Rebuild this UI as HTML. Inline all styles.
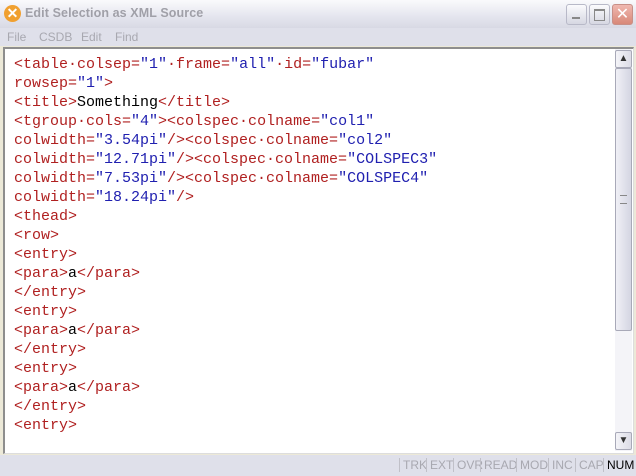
<!DOCTYPE html>
<html><head><style>
body{margin:0;width:636px;height:476px;overflow:hidden;background:#ece9d8;font-family:"Liberation Sans",sans-serif;position:relative}
.title{position:absolute;left:0;top:0;width:636px;height:28px;background:linear-gradient(#fafafc,#e4e5ee 60%,#d8d9e4);}
.title span{position:absolute;left:25px;top:6px;font-size:12.5px;font-weight:bold;color:#a0a0a8;letter-spacing:0.1px}
.logo{position:absolute;left:4px;top:5px;width:17px;height:17px;border-radius:50%;background:#f0a030;color:#fff;font-size:14px;font-weight:bold;text-align:center;line-height:17px}
.btn{position:absolute;top:4px;width:19px;height:19px;border:1px solid #b8b9c8;border-radius:3px;background:linear-gradient(#fbfbfd,#d6d7e2)}
.menu{position:absolute;left:0;top:28px;width:636px;height:18px;background:#dfe0ea;font-size:12px;color:#a8a8b0}
.menu span{position:absolute;top:2px}
.edit{position:absolute;left:3px;top:47px;width:628px;height:404px;background:#fff;border-top:2px solid #8e8e8e;border-left:2px solid #8e8e8e;border-right:1px solid #ddd;border-bottom:1px solid #ddd}
pre{margin:0;position:absolute;left:9px;top:6px;font-family:"Liberation Mono",monospace;font-size:15px;line-height:19px;color:#b02020;-webkit-text-stroke:0}
.v{color:#2020b0}.t{color:#000}
.sb{position:absolute;left:615px;top:49px;width:17px;height:402px;background:#f4f4f8}
.sbb{position:absolute;left:0;width:15px;height:16px;border:1px solid #a8a9b8;border-radius:2px;background:linear-gradient(90deg,#f4f4f8,#dcdce6);font-size:10px;text-align:center;line-height:16px;color:#333}
.thumb{position:absolute;left:0;top:19px;width:15px;height:261px;border:1px solid #a8a9b8;border-radius:2px;background:linear-gradient(90deg,#f0f0f6,#d4d5e2)}
.status{position:absolute;left:0;top:455px;width:636px;height:21px;background:#dfe0ea;font-size:12px;color:#a8a8b0}
.status span{position:absolute;top:3px;border-left:1px solid #c0c0c8;padding-left:3px}
</style></head><body>
<div class="title"><div class="logo">✕</div><span>Edit Selection as XML Source</span>
<div class="btn" style="left:566px"><div style="position:absolute;left:5px;top:12px;width:8px;height:2px;background:#888"></div></div>
<div class="btn" style="left:589px"><div style="position:absolute;left:4px;top:4px;width:9px;height:9px;border:1px solid #888;border-top-width:2px"></div></div>
<div class="btn" style="left:612px;background:linear-gradient(#f0b8b0,#d88878);border-color:#c89088;color:#fff;font-size:16px;text-align:center;line-height:19px">✕</div>
</div>
<div class="menu"><span style="left:7px">File</span><span style="left:39px">CSDB</span><span style="left:81px">Edit</span><span style="left:115px">Find</span></div>
<div class="edit"><pre>&lt;table·colsep=<span class="v">"1"</span>·frame=<span class="v">"all"</span>·id=<span class="v">"fubar"</span>
rowsep=<span class="v">"1"</span>&gt;
&lt;title&gt;<span class="t">Something</span>&lt;/title&gt;
&lt;tgroup·cols=<span class="v">"4"</span>&gt;&lt;colspec·colname=<span class="v">"col1"</span>
colwidth=<span class="v">"3.54pi"</span>/&gt;&lt;colspec·colname=<span class="v">"col2"</span>
colwidth=<span class="v">"12.71pi"</span>/&gt;&lt;colspec·colname=<span class="v">"COLSPEC3"</span>
colwidth=<span class="v">"7.53pi"</span>/&gt;&lt;colspec·colname=<span class="v">"COLSPEC4"</span>
colwidth=<span class="v">"18.24pi"</span>/&gt;
&lt;thead&gt;
&lt;row&gt;
&lt;entry&gt;
&lt;para&gt;<span class="t">a</span>&lt;/para&gt;
&lt;/entry&gt;
&lt;entry&gt;
&lt;para&gt;<span class="t">a</span>&lt;/para&gt;
&lt;/entry&gt;
&lt;entry&gt;
&lt;para&gt;<span class="t">a</span>&lt;/para&gt;
&lt;/entry&gt;
&lt;entry&gt;</pre></div>
<div class="sb"><div class="sbb" style="top:1px">▲</div><div class="thumb"><div style="position:absolute;left:4px;top:126px;width:7px;height:7px;border-top:1px solid #888;border-bottom:1px solid #888"></div></div><div class="sbb" style="top:383px">▼</div></div>
<div class="status"><span style="left:399px">TRK</span><span style="left:426px">EXT</span><span style="left:453px">OVR</span><span style="left:480px">READ</span><span style="left:516px">MOD</span><span style="left:548px">INC</span><span style="left:575px">CAP</span><span style="left:603px;color:#000">NUM</span></div>
</body></html>
